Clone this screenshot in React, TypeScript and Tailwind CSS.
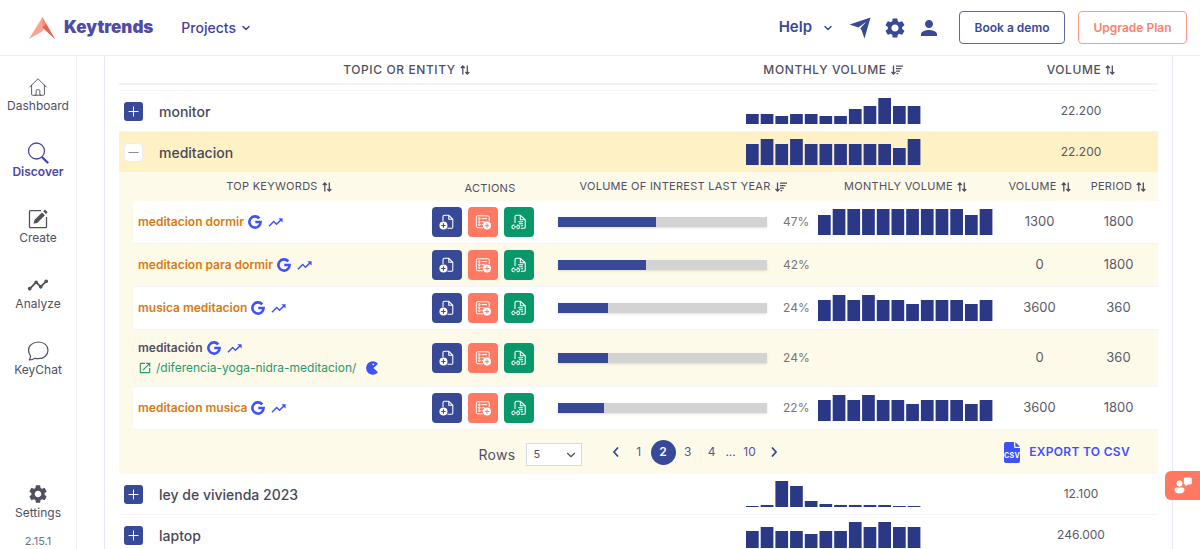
import { Fragment, useState } from 'react';
import type { ReactNode } from 'react';
import { HiOutlineHome } from 'react-icons/hi';
import { MdOpenInNew, MdPerson, MdSettings, MdTimeline, MdTrendingUp } from 'react-icons/md';
import { LuChevronDown } from 'react-icons/lu';

type Keyword = {
    name: string;
    url?: string;
    interest: number;
    months?: number[];
    volume: string;
    period: string;
};

type Topic = {
    name: string;
    months: number[];
    volume: string;
    keywords?: Keyword[];
};

const musicMonths = [21, 26, 21, 26, 21, 21, 17, 21, 21, 21, 17, 21];

const topics: Topic[] = [
    { name: 'monitor', months: [10, 10, 8, 10, 10, 8, 8, 15, 18, 26, 18, 18], volume: '22.200' },
    {
        name: 'meditacion',
        months: [21, 26, 21, 26, 21, 21, 21, 21, 21, 21, 17, 26],
        volume: '22.200',
        keywords: [
            {
                name: 'meditacion dormir',
                interest: 47,
                months: [20, 26, 26, 26, 26, 26, 26, 26, 26, 26, 20, 26],
                volume: '1300',
                period: '1800',
            },
            { name: 'meditacion para dormir', interest: 42, volume: '0', period: '1800' },
            { name: 'musica meditacion', interest: 24, months: musicMonths, volume: '3600', period: '360' },
            { name: 'meditación', url: '/diferencia-yoga-nidra-meditacion/', interest: 24, volume: '0', period: '360' },
            { name: 'meditacion musica', interest: 22, months: musicMonths, volume: '3600', period: '1800' },
        ],
    },
    { name: 'ley de vivienda 2023', months: [1, 2, 26, 21, 6, 3, 2, 2, 2, 2, 1, 1], volume: '12.100' },
    { name: 'laptop', months: [17, 21, 17, 17, 14, 17, 17, 26, 21, 26, 21, 21], volume: '246.000' },
];

function Logo() {
    return (
        <svg viewBox="0 0 26 22" className="h-[22px] w-[26px]" aria-hidden="true">
            <path d="M13.5 0 0 22l13-7.5 4-4.5z" fill="#fba293" />
            <path d="M13.5 0 26 22l-12.500-11.500z" fill="#f98977" />
            <path d="M13.500 10.500 17 7l9 15z" fill="#e2644f" />
        </svg>
    );
}

function SendIcon() {
    return (
        <svg viewBox="0 0 22 22" className="size-[22px]" fill="currentColor" aria-hidden="true">
            <path d="M21.500.5 15.500 21.500l-3-8.500-1.300-1.500L17.500 4.500 9.500 10.500.5 7.500z" />
        </svg>
    );
}

function SearchIcon() {
    return (
        <svg viewBox="0 0 22 22" className="size-[22px]" fill="none" stroke="currentColor" strokeLinecap="round" aria-hidden="true">
            <circle cx="9.500" cy="9" r="8" strokeWidth="1.300" />
            <path d="m15.500 15.500 5 5" strokeWidth="2.400" />
        </svg>
    );
}

function CreateIcon() {
    return (
        <svg viewBox="0 0 20 20" className="size-5" fill="none" stroke="currentColor" aria-hidden="true">
            <path d="M13 1.700H2.500a1 1 0 0 0-1 1v15a1 1 0 0 0 1 1h15a1 1 0 0 0 1-1V8" strokeWidth="1.300" />
            <path d="M5.500 14.800 6.600 10.800 14 3.400l2.900 2.900-7.400 7.400zM15.200 2.400l1.300-1.300a.7.700 0 0 1 1 0l1.700 1.700a.7.700 0 0 1 0 1l-1.200 1.300z" fill="currentColor" stroke="none" />
        </svg>
    );
}

function ChatIcon() {
    return (
        <svg viewBox="0 0 22 20" className="h-5 w-[22px]" fill="none" stroke="currentColor" strokeWidth="1.200" strokeLinejoin="round" aria-hidden="true">
            <path d="M11.500 1C6 1 1.500 4.600 1.500 9.200c0 2.400.9 4.200 2 5.700.2 1.400-.5 2.800-1.200 4 2 .1 4-.5 5.500-1.600 1.200.3 2.400.4 3.700.4 5.500 0 9.500-3.700 9.500-8.400S17 1 11.500 1z" />
        </svg>
    );
}

function GoogleIcon() {
    return (
        <svg viewBox="0 0 14 14" className="size-[14px]" fill="none" stroke="currentColor" strokeWidth="2.600" aria-hidden="true">
            <path d="M11.300 3.400A5.600 5.600 0 1 0 12.600 7H7.300" />
        </svg>
    );
}

function SortBoth() {
    return (
        <svg viewBox="0 0 10 10" className="size-[10px]" fill="none" stroke="currentColor" strokeWidth="1.300" aria-hidden="true">
            <path d="M2.800 9.500V1M.8 3l2-2 2 2M7.300.5V9M5.300 7l2 2 2-2" />
        </svg>
    );
}

function SortDown() {
    return (
        <svg viewBox="0 0 12 10" className="h-[10px] w-3" fill="none" stroke="currentColor" strokeWidth="1.300" aria-hidden="true">
            <path d="M2.500.5V9M.5 7l2 2 2-2M5 1.200h7M5 3.700h5.500M5 6.200h4M5.500 8.700h1.800" />
        </svg>
    );
}

function PacmanIcon() {
    return (
        <svg viewBox="0 0 14 14" className="size-[14px]" aria-hidden="true">
            <path d="M13 2.800A6.700 6.700 0 1 0 13 11.200L8.500 7z" fill="#3d52fb" />
            <circle cx="8.300" cy="3.300" r=".9" fill="#fff" />
        </svg>
    );
}

function CsvIcon() {
    return (
        <svg viewBox="0 0 16 21" className="h-[21px] w-4" aria-hidden="true">
            <path d="M2 0h8v4.500A1.500 1.500 0 0 0 11.500 6H16v13a2 2 0 0 1-2 2H2a2 2 0 0 1-2-2V2a2 2 0 0 1 2-2zM11.300 0 16 4.800h-4.700z" fill="currentColor" />
            <text x="8" y="15.500" textAnchor="middle" fontSize="7" fontWeight="700" fill="#fff">CSV</text>
        </svg>
    );
}

function PageAddIcon() {
    return (
        <svg viewBox="0 0 18 18" className="size-4" fill="none" stroke="#fff" strokeWidth="1.200" aria-hidden="true">
            <path d="M4.500 8V3a1.500 1.500 0 0 1 1.500-1.500h5L15.500 6v8.500A1.500 1.500 0 0 1 14 16H9.500M11 1.500V6h4.500" />
            <circle cx="5" cy="13" r="4.500" fill="#fff" stroke="none" />
            <path d="M2.500 13h5M5 10.500v5" stroke="#3a4a96" />
        </svg>
    );
}

function ListAddIcon() {
    return (
        <svg viewBox="0 0 18 18" className="size-4" fill="none" stroke="#fff" strokeWidth="1.100" aria-hidden="true">
            <path d="M9 15.500H3A1.500 1.500 0 0 1 1.500 14V3.500A1.500 1.500 0 0 1 3 2h11.500A1.500 1.500 0 0 1 16 3.500V8" />
            <path d="M7.500 5.200h6M7.500 8.700h3.500M7.500 12H9" />
            <circle cx="4.800" cy="5.200" r="1" />
            <circle cx="4.800" cy="8.700" r="1" />
            <circle cx="4.800" cy="12" r="1" />
            <circle cx="13.500" cy="13" r="4.500" fill="#fff" stroke="none" />
            <path d="M11 13h5M13.500 10.500v5" stroke="#ff7a66" />
        </svg>
    );
}

function PageLinkIcon() {
    return (
        <svg viewBox="0 0 18 18" className="size-4" fill="none" stroke="#fff" strokeWidth="1.200" aria-hidden="true">
            <path d="M4.500 10V3A1.500 1.500 0 0 1 6 1.500h4.500L16 6.500v8a1.500 1.500 0 0 1-1.500 1.500H11M10.500 1.500v5H16M8 8.700h5.500M9 11h4.500M11 13.300h2.500" />
            <path d="M4 12.500H3a2 2 0 0 0 0 4h1M6.500 12.500h1a2 2 0 0 1 0 4h-1M3.500 14.500h4" />
        </svg>
    );
}

function FeedbackIcon() {
    return (
        <svg viewBox="0 0 18 17" className="h-[17px] w-[18px]" fill="currentColor" aria-hidden="true">
            <circle cx="5.500" cy="6.500" r="3" />
            <path d="M2.500 10.500h6A2 2 0 0 1 10.500 12.500c0 2.500-2 4-5 4s-5-1.500-5-4a2 2 0 0 1 2-2zM11.300.5h5a1.500 1.500 0 0 1 1.500 1.500v4a1.500 1.500 0 0 1-1.500 1.500h-2.300l-2.500 2v-2a1.500 1.500 0 0 1-1.700-1.500V2A1.500 1.500 0 0 1 11.300.5z" />
        </svg>
    );
}

function VolumeChart({ months }: { months: number[] }) {
    return (
        <svg viewBox="0 0 175 26" className="mx-auto block h-[26px] w-[175px]" role="img" aria-label="Monthly volume">
            {months.map((value, i) => (
                <rect key={i} x={i * 14.7} y={26 - value} width="12.700" height={value} fill="#2b3885" />
            ))}
        </svg>
    );
}

const navItems = [
    { label: 'Dashboard', icon: <HiOutlineHome className="size-[22px] [&_path]:stroke-1" /> },
    { label: 'Discover', icon: <SearchIcon />, active: true },
    { label: 'Create', icon: <CreateIcon /> },
    { label: 'Analyze', icon: <MdTimeline className="size-[22px]" /> },
    { label: 'KeyChat', icon: <ChatIcon /> },
];

function NavItem({ label, icon, active }: { label: string; icon: ReactNode; active?: boolean }) {
    return (
        <a href="#" className={active ? 'flex flex-col items-center text-[12px] leading-4 font-semibold text-[#4a48a0]' : 'flex flex-col items-center text-[12px] leading-4 text-[#50505f]'}>
            <span className="flex h-[22px] items-center">{icon}</span>
            {label}
        </a>
    );
}

function Header() {
    return (
        <header className="flex h-14 shrink-0 items-center border-b border-[#eeeef6] pr-[13px] pl-[29px]">
            <a href="#" className="flex items-center gap-[9px] text-[17px] font-black text-[#4f4ba6]">
                <Logo />
                Keytrends
            </a>
            <button className="ml-7 flex items-center gap-1 text-[14px] font-medium text-[#4340a0]">
                Projects <LuChevronDown className="size-3 stroke-3" />
            </button>
            <div className="ml-auto flex items-center text-[#384a97]">
                <button className="flex items-center gap-[10px] text-[15px] font-semibold">
                    Help <LuChevronDown className="size-3 stroke-3" />
                </button>
                <button aria-label="Send" className="ml-[15px]"><SendIcon /></button>
                <button aria-label="Preferences" className="ml-3"><MdSettings className="size-6" /></button>
                <button aria-label="Account" className="ml-[10px]"><MdPerson className="size-6" /></button>
                <button className="ml-[18px] h-[33px] w-[106px] rounded border border-[#5a68a8] text-[12px] font-semibold">Book a demo</button>
                <button className="ml-[13px] h-[33px] w-[109px] rounded border border-[#ff9a8b] text-[12px] font-semibold text-[#ff806e]">Upgrade Plan</button>
            </div>
        </header>
    );
}

function ColumnHead({ label, sorted, plain }: { label: string; sorted?: boolean; plain?: boolean }) {
    return (
        <span className={plain ? 'block pt-1' : 'flex items-center justify-center gap-1 whitespace-nowrap'}>
            {label}
            {!plain && <button aria-label={`Sort by ${label}`}>{sorted ? <SortDown /> : <SortBoth />}</button>}
        </span>
    );
}

function KeywordRow({ keyword, striped }: { keyword: Keyword; striped: boolean }) {
    return (
        <tr className={striped ? 'bg-[#fefaea]' : 'bg-white'}>
            <td className={keyword.url ? 'h-[57px] border-b border-[#f4f4f8] pl-[5px]' : 'h-[43px] border-b border-[#f4f4f8] pl-[5px]'}>
                <div className="flex items-center">
                    <span className={keyword.url ? 'text-[12px] font-semibold text-[#505062]' : 'text-[12px] font-semibold text-[#d97a12]'}>{keyword.name}</span>
                    <a href="#" aria-label="Search on Google" className="ml-1 text-[#3d52fb]"><GoogleIcon /></a>
                    <a href="#" aria-label="See trend" className="ml-[5px] text-[#3d52fb]"><MdTrendingUp className="size-[17px]" /></a>
                </div>
                {keyword.url && (
                    <div className="flex items-center pt-[2px]">
                        <a href="#" className="flex items-center gap-1 text-[12px] text-[#27996c]">
                            <MdOpenInNew className="size-[14px]" />
                            {keyword.url}
                        </a>
                        <button aria-label="Cannibalization" className="ml-[9px]"><PacmanIcon /></button>
                    </div>
                )}
            </td>
            <td className="border-b border-[#f4f4f8] pl-[7px]">
                <div className="flex gap-[6px]">
                    <button aria-label="Create page" className="flex size-[30px] items-center justify-center rounded bg-[#384a97]"><PageAddIcon /></button>
                    <button aria-label="Add to list" className="flex size-[30px] items-center justify-center rounded bg-[#ff7862]"><ListAddIcon /></button>
                    <button aria-label="Link page" className="flex size-[30px] items-center justify-center rounded bg-[#08986a]"><PageLinkIcon /></button>
                </div>
            </td>
            <td className="border-b border-[#f4f4f8] pr-[3px] pl-[3px]">
                <div className="flex items-center gap-4">
                    <div className="h-[10px] flex-1 bg-[#d3d3d3] shadow-sm">
                        <div className="h-full bg-[#384a97]" style={{ width: `${keyword.interest}%` }} />
                    </div>
                    <span className="w-[25px] text-[12px] text-[#777]">{keyword.interest}%</span>
                </div>
            </td>
            <td className="border-b border-[#f4f4f8]">{keyword.months && <VolumeChart months={keyword.months} />}</td>
            <td className="border-b border-[#f4f4f8] text-center">{keyword.volume}</td>
            <td className="border-b border-[#f4f4f8] text-center">{keyword.period}</td>
        </tr>
    );
}

function Pagination() {
    const [page, setPage] = useState(2);
    const pageButton = (n: number) => (
        <button
            key={n}
            onClick={() => setPage(n)}
            className={n === page ? 'size-[25px] rounded-full bg-[#384a97] text-[12px] font-semibold text-white' : 'h-[25px] w-6 text-[12px] text-[#4f5a96]'}
        >
            {n}
        </button>
    );

    return (
        <div className="grid h-11 grid-cols-[1fr_auto_1fr] items-center pr-7 pl-2">
            <div className="col-start-2 flex items-center">
                <label htmlFor="rows" className="pt-1 text-[14px] tracking-wide text-[#505062]">Rows</label>
                <div className="relative mt-1 ml-[10px]">
                    <select id="rows" defaultValue="5" className="block h-[23px] w-14 appearance-none border border-[#d9d9ec] bg-white pl-[7px] text-[11px] text-[#505062]">
                        <option>5</option>
                        <option>10</option>
                        <option>20</option>
                    </select>
                    <LuChevronDown className="pointer-events-none absolute top-[5px] right-1 size-[14px] text-[#505062]" />
                </div>
                <nav aria-label="Pages" className="ml-[26px] flex items-center text-[#384a97]">
                    <button aria-label="Previous page" className="w-[19px]">
                        <svg viewBox="0 0 8 12" className="mx-1 h-3 w-2" fill="none" stroke="currentColor" strokeWidth="1.800"><path d="M6 1.500 2 6l4 4.500" /></svg>
                    </button>
                    {[1, 2, 3, 4].map(pageButton)}
                    <span className="w-[14px] text-center text-[12px]">...</span>
                    {pageButton(10)}
                    <button aria-label="Next page" className="w-[17px]">
                        <svg viewBox="0 0 8 12" className="ml-2 h-3 w-2" fill="none" stroke="currentColor" strokeWidth="1.800"><path d="m2 1.500 4 4.500-4 4.500" /></svg>
                    </button>
                </nav>
            </div>
            <button className="flex items-center gap-[9px] justify-self-end text-[12px] font-semibold tracking-wide text-[#3d52fb]">
                <CsvIcon />
                <span>EXPORT TO CSV</span>
            </button>
        </div>
    );
}

function KeywordTable({ keywords }: { keywords: Keyword[] }) {
    return (
        <div className="bg-[#fefaea]">
            <div className="pl-[14px]">
                <table className="w-full table-fixed border-separate border-spacing-0 text-[13px] text-[#5a5a66]">
                    <colgroup>
                        <col />
                        <col className="w-[130px]" />
                        <col className="w-[256px]" />
                        <col className="w-[189px]" />
                        <col className="w-[79px]" />
                        <col className="w-[79px]" />
                    </colgroup>
                    <thead>
                        <tr className="h-[29px] text-[11px] tracking-wide text-[#505062] [&_th]:font-normal">
                            <th><ColumnHead label="TOP KEYWORDS" /></th>
                            <th><ColumnHead label="ACTIONS" plain /></th>
                            <th><ColumnHead label="VOLUME OF INTEREST LAST YEAR" sorted /></th>
                            <th><ColumnHead label="MONTHLY VOLUME" /></th>
                            <th><ColumnHead label="VOLUME" /></th>
                            <th><ColumnHead label="PERIOD" /></th>
                        </tr>
                    </thead>
                    <tbody>
                        {keywords.map((keyword, i) => (
                            <KeywordRow key={keyword.name} keyword={keyword} striped={i % 2 === 1} />
                        ))}
                    </tbody>
                </table>
            </div>
            <Pagination />
        </div>
    );
}

function TopicTable() {
    const [open, setOpen] = useState('meditacion');

    return (
        <table className="w-full table-fixed border-separate border-spacing-0">
            <colgroup>
                <col className="w-8" />
                <col />
                <col className="w-[342px]" />
                <col className="w-[154px]" />
            </colgroup>
            <thead>
                <tr className="text-[12px] tracking-wider text-[#505062] [&_th]:h-[29px] [&_th]:border-b-2 [&_th]:border-[#f3f2f9] [&_th]:font-medium">
                    <th aria-label="Expand" />
                    <th><ColumnHead label="TOPIC OR ENTITY" /></th>
                    <th><ColumnHead label="MONTHLY VOLUME" sorted /></th>
                    <th><ColumnHead label="VOLUME" /></th>
                </tr>
            </thead>
            <tbody>
                <tr>
                    <td colSpan={4} className="h-[6px] border-b border-[#f4f4f8]" />
                </tr>
                {topics.map((topic) => {
                    const expanded = topic.name === open && topic.keywords;
                    return (
                        <Fragment key={topic.name}>
                            <tr className={expanded ? 'bg-[#fef1c6] [&>td]:h-10' : '[&>td]:h-[41px] [&>td]:border-b [&>td]:border-[#f4f4f8]'}>
                                <td className="pl-[5px]">
                                    <button
                                        aria-label={expanded ? 'Collapse' : 'Expand'}
                                        onClick={() => setOpen(expanded ? '' : topic.name)}
                                        className={expanded ? 'flex size-[19px] items-center justify-center rounded border border-[#ececf4] bg-white text-[#8e8e9a]' : 'flex size-[19px] items-center justify-center rounded-[3px] bg-[#384a97] text-white'}
                                    >
                                        <svg viewBox="0 0 11 11" className="size-[11px]" stroke="currentColor" strokeWidth="1">
                                            <path d={expanded ? 'M.5 5.500h10' : 'M.5 5.500h10M5.500.5v10'} />
                                        </svg>
                                    </button>
                                </td>
                                <td className="pl-2 text-[14px] font-medium text-[#484858]">{topic.name}</td>
                                <td><VolumeChart months={topic.months} /></td>
                                <td className="text-center text-[12px] text-[#5a5a66]">{topic.volume}</td>
                            </tr>
                            {expanded && (
                                <tr>
                                    <td colSpan={4} className="p-0"><KeywordTable keywords={topic.keywords!} /></td>
                                </tr>
                            )}
                        </Fragment>
                    );
                })}
            </tbody>
        </table>
    );
}

export default function App() {
    return (
        <div className="flex h-screen flex-col overflow-hidden bg-white font-['Inter',sans-serif]">
            <Header />
            <div className="flex min-h-0 flex-1">
                <aside className="flex w-[77px] shrink-0 flex-col gap-7 border-r border-[#f2f2f7] pt-5">
                    {navItems.map((item) => (
                        <NavItem key={item.label} {...item} />
                    ))}
                    <div className="mt-auto flex flex-col gap-3">
                        <NavItem label="Settings" icon={<MdSettings className="size-[22px]" />} />
                        <span className="text-center text-[11px] leading-4 text-[#70707c]">2.15.1</span>
                    </div>
                </aside>
                <main className="min-w-0 flex-1 overflow-hidden pr-[27px] pl-[27px]">
                    <div className="border-x border-[#e9e8f4] px-[14px]">
                        <TopicTable />
                    </div>
                </main>
            </div>
            {/* Floating feedback tab */}
            <button aria-label="Feedback" className="fixed right-0 bottom-[49px] flex h-[29px] w-[35px] items-center justify-center rounded-l-md bg-[#ff7862] text-white">
                <FeedbackIcon />
            </button>
        </div>
    );
}
